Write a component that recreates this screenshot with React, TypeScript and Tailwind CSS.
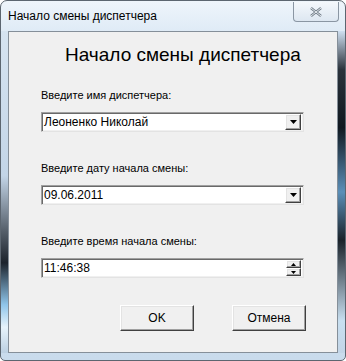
import React from "react";

const sunken =
  "border border-t-[#a0a0a0] border-l-[#a0a0a0] border-r-[#e3e3e3] border-b-[#e3e3e3] shadow-[inset_1px_1px_0_#696969,inset_-1px_-1px_0_#f0f0f0] bg-white";

const raised =
  "border border-t-[#ffffff] border-l-[#ffffff] border-r-[#404040] border-b-[#404040] shadow-[inset_-1px_-1px_0_#a0a0a0,inset_1px_1px_0_#e3e3e3] bg-[#f0f0f0]";

function Arrow({ small = false }: { small?: boolean }) {
  return small ? (
    <svg width="5" height="3" viewBox="0 0 5 3">
      <path d="M0 0h5L2.5 3z" fill="#000" />
    </svg>
  ) : (
    <svg width="7" height="4" viewBox="0 0 7 4">
      <path d="M0 0h7L3.5 4z" fill="#000" />
    </svg>
  );
}

function Combo({ value }: { value: string }) {
  return (
    <div className={`${sunken} h-[20px] w-[263px] flex items-center pl-[2px] pr-[2px]`}>
      <span className="flex-1 text-[12px] leading-none">{value}</span>
      <div className={`${raised} w-[16px] h-[16px] flex items-center justify-center`}>
        <Arrow />
      </div>
    </div>
  );
}

export default function App() {
  return (
    <div
      className="w-[346px] h-[361px] flex flex-col rounded-t-[7px] rounded-b-[5px] border border-[#5c6670] bg-[linear-gradient(180deg,#eef5fb_0%,#dce9f5_10%,#c9dbec_100%)] text-black overflow-hidden"
      style={{ fontFamily: '"Liberation Sans", Arial, sans-serif' }}
    >
      {/* title bar */}
      <div className="h-[30px] flex items-start shrink-0">
        <span className="pl-[7px] pt-[9px] text-[12px] leading-none text-black">Начало смены диспетчера</span>
        <div className="flex-1" />
        <div className="mt-[1px] mr-[6px] w-[46px] h-[20px] rounded-b-[4px] border border-[#8a96a3] border-t-0 bg-[linear-gradient(180deg,#f4f8fc,#dde7f1)] flex items-center justify-center">
          <svg width="12" height="10" viewBox="0 0 12 10">
            <path d="M1 1l10 8M11 1L1 9" stroke="#6e7a86" strokeWidth="2.4" />
            <path d="M1 1l10 8M11 1L1 9" stroke="#f4f8fc" strokeWidth="0.9" />
          </svg>
        </div>
      </div>

      <div className="flex flex-1">
        <div className="w-[7px] bg-[linear-gradient(180deg,#d6e4f1_0%,#c3d5e7_45%,#56606b_62%,#1c232c_72%,#8fc5ea_85%,#e7f3fb_92%,#bcd0e2_100%)]" />

        {/* client area */}
        <div className="w-[330px] h-[322px] border border-[#858f99] bg-[#f0f0f0] flex flex-col pl-[32px]">
          <div className="pl-[24px] pt-[13px] text-[19px] leading-none h-[34px]">Начало смены диспетчера</div>

          <div className="mt-[24px] text-[11px] leading-none h-[11px]">Введите имя диспетчера:</div>
          <div className="mt-[11px]">
            <Combo value="Леоненко Николай" />
          </div>

          <div className="mt-[31px] text-[11px] leading-none h-[11px]">Введите дату начала смены:</div>
          <div className="mt-[11px]">
            <Combo value="09.06.2011" />
          </div>

          <div className="mt-[31px] text-[11px] leading-none h-[11px]">Введите время начала смены:</div>
          <div className="mt-[11px]">
            <div className={`${sunken} h-[20px] w-[263px] flex items-center pl-[2px] pr-[2px]`}>
              <span className="flex-1 text-[12px] leading-none">11:46:38</span>
              <div className="flex flex-col">
                <div className={`${raised} w-[15px] h-[8px] flex items-center justify-center`}>
                  <svg width="5" height="3" viewBox="0 0 5 3">
                    <path d="M0 3h5L2.5 0z" fill="#000" />
                  </svg>
                </div>
                <div className={`${raised} w-[15px] h-[8px] flex items-center justify-center`}>
                  <Arrow small />
                </div>
              </div>
            </div>
          </div>

          <div className="mt-[27px] flex pl-[79px] gap-[38px]">
            <button className={`${raised} w-[74px] h-[26px] text-[12px] leading-none`}>OK</button>
            <button className={`${raised} w-[74px] h-[26px] text-[12px] leading-none`}>Отмена</button>
          </div>
        </div>

        <div className="w-[7px] bg-[linear-gradient(180deg,#cfdff0_0%,#2a323b_12%,#101820_30%,#5b8fb8_50%,#1a222a_65%,#c8dff0_90%,#c3d5e7_100%)]" />
      </div>
      <div className="h-[7px] shrink-0" />
    </div>
  );
}
